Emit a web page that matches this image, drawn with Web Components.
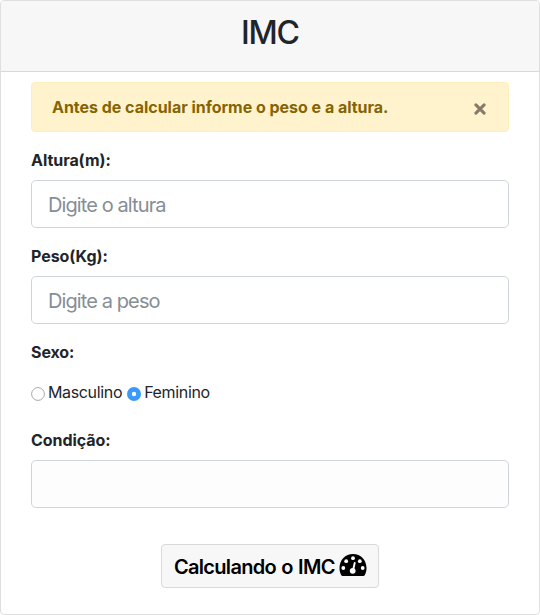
<!DOCTYPE html>
<html lang="pt">
<head>
<meta charset="utf-8">
<title>IMC</title>
<style>
html,body{margin:0;height:100%;background:#fff}
body{font:16px/24px Inter,"Liberation Sans",sans-serif;color:#212529}
</style>
</head>
<body>
<imc-card>
  <span slot="title">IMC</span>
  <imc-alert>Antes de calcular informe o peso e a altura.</imc-alert>
  <imc-field label="Altura(m):" placeholder="Digite o altura"></imc-field>
  <imc-field label="Peso(Kg):" placeholder="Digite a peso"></imc-field>
  <imc-options label="Sexo:"><imc-radio>Masculino</imc-radio><imc-radio checked>Feminino</imc-radio></imc-options>
  <imc-field label="Condição:" readonly></imc-field>
  <imc-button>Calculando o IMC</imc-button>
</imc-card>
<script>
function define(name, render) {
  customElements.define(name, class extends HTMLElement {
    connectedCallback() {
      if (this.shadowRoot) return;
      const t = document.createElement('template');
      t.innerHTML = '<style>*{box-sizing:border-box}:host{box-sizing:border-box}</style>' + render(this);
      this.attachShadow({mode: 'open'}).append(t.content.cloneNode(true));
    }
  });
}

define('imc-card', () => `
<style>
:host{display:flex;flex-direction:column;height:615px;border:1px solid #dfdfdf;border-radius:4px;overflow:hidden;background:#fff}
header{flex:none;height:71px;padding-top:13px;background:#f7f7f7;border-bottom:1px solid #d9d9d9;text-align:center;font-size:32px;line-height:38px;font-weight:500;letter-spacing:-1.2px}
main{display:flex;flex-direction:column;padding:10px 30px 0}
</style>
<header><slot name="title"></slot></header>
<main><slot></slot></main>`);

define('imc-alert', () => `
<style>
:host{display:flex;align-items:center;justify-content:space-between;height:50px;margin-bottom:16px;padding:0 22px 0 20px;background:#fff3cd;border:1px solid #ffeeba;border-radius:4px;color:#856404;font-weight:700;letter-spacing:-.02px}
svg{display:block;margin-top:3px}
</style>
<span><slot></slot></span>
<svg width="12" height="12" viewBox="0 0 12 12"><path d="M1.9 1.9 10.1 10.1M10.1 1.9 1.9 10.1" stroke="#857b67" stroke-width="3" stroke-linecap="round"/></svg>`);

define('imc-field', el => `
<style>
:host{display:block;margin-bottom:16px}
label{display:block;font-weight:700;margin-bottom:8px;letter-spacing:-.05px}
input{display:block;width:100%;height:48px;padding:2px 16px 0;border:1px solid #ced4da;border-radius:4.8px;background:#fff;font:20px/30px Inter,"Liberation Sans",sans-serif;letter-spacing:-.9px;color:#495057;outline:0}
input[readonly]{background:#fdfdfd}
input::placeholder{color:#868e96;opacity:1}
</style>
<label for="f">${el.getAttribute('label')}</label>
<input id="f" placeholder="${el.getAttribute('placeholder') || ''}" ${el.hasAttribute('readonly') ? 'readonly' : ''}>`);

define('imc-options', el => `
<style>
:host{display:block;margin-bottom:24px}
b{display:block;margin-bottom:16px;letter-spacing:-.1px}
div{display:flex;gap:5px}
</style>
<b>${el.getAttribute('label')}</b>
<div><slot></slot></div>`);

define('imc-radio', el => `
<style>
:host{display:flex;align-items:center;gap:3px;letter-spacing:-.35px}
svg{flex:none;margin-top:4px}
</style>
<svg width="14" height="14" viewBox="0 0 14 14">${el.hasAttribute('checked')
  ? '<circle cx="7" cy="7" r="7" fill="#3b99fc"/><circle cx="7" cy="7" r="2.2" fill="#fff"/>'
  : '<circle cx="7" cy="7" r="6.4" fill="#fff" stroke="#a8a8a8"/>'}</svg>
<span><slot></slot></span>`);

define('imc-button', () => `
<style>
:host{display:block;align-self:center;margin-top:20px}
button{display:flex;align-items:center;width:218px;height:44px;padding:2px 0 0 12px;gap:5px;border:1px solid #d9d9d9;border-radius:4px;background:#f7f7f7;color:#000;font:600 20px/30px Inter,"Liberation Sans",sans-serif;letter-spacing:-.7px;word-spacing:1px;white-space:nowrap}
span{width:160px}
svg{flex:none;margin-top:-4px}
</style>
<button><span><slot></slot></span><svg width="28" height="22" viewBox="0 0 28 22">
<path d="M14 0C6.3 0 .5 6.2.5 13.9c0 2.6.5 5.1 1.8 7.3.3.5.7.8 1.3.8h20.8c.6 0 1-.3 1.3-.8 1.3-2.2 1.8-4.7 1.8-7.3C27.5 6.2 21.7 0 14 0z"/>
<g fill="#fff"><circle cx="4.3" cy="14" r="1.9"/><circle cx="7.2" cy="7.2" r="1.9"/><circle cx="14" cy="4.2" r="1.9"/><circle cx="20.8" cy="7.2" r="1.9"/><circle cx="23.7" cy="14" r="1.9"/><circle cx="13.7" cy="16.8" r="2.9"/></g>
<path d="M14 16.5 15.7 9" stroke="#fff" stroke-width="1.9" stroke-linecap="round"/></svg></button>`);
</script>
</body>
</html>
